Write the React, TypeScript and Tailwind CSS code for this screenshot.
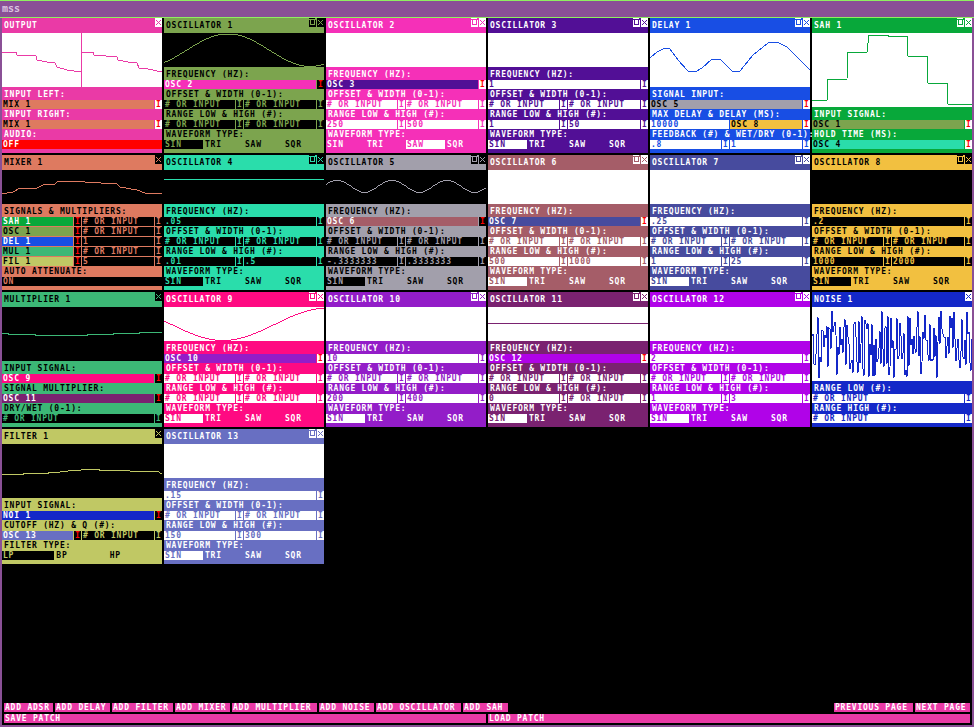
// modular synth patch page
type Tone = { bg: string; text: string; dark: boolean };
type Field = { v?: string; src?: string; bare?: boolean };
type Row =
  | { kind: "label"; text: string }
  | { kind: "fields"; fields: Field[] }
  | { kind: "choice"; items: string[]; on: number; red?: boolean };

type Mod = {
  tone: Tone;
  title: string;
  h: string;
  lines?: string[];
  min?: boolean;
  rows: Row[];
};

const T: Record<string, Tone> = {
  out: { bg: "bg-[#ea3aa6]", text: "text-[#ea3aa6]", dark: false },
  osc1: { bg: "bg-[#7ca44e]", text: "text-[#7ca44e]", dark: true },
  osc2: { bg: "bg-[#f530b8]", text: "text-[#f530b8]", dark: false },
  osc3: { bg: "bg-[#520f96]", text: "text-[#520f96]", dark: false },
  del: { bg: "bg-[#184ee4]", text: "text-[#184ee4]", dark: false },
  sah: { bg: "bg-[#08a83a]", text: "text-[#08a83a]", dark: false },
  mix: { bg: "bg-[#de7a60]", text: "text-[#de7a60]", dark: true },
  osc4: { bg: "bg-[#2addab]", text: "text-[#2addab]", dark: true },
  osc5: { bg: "bg-[#a29fab]", text: "text-[#a29fab]", dark: true },
  osc6: { bg: "bg-[#a55d68]", text: "text-[#a55d68]", dark: false },
  osc7: { bg: "bg-[#474b9e]", text: "text-[#474b9e]", dark: false },
  osc8: { bg: "bg-[#f2c040]", text: "text-[#f2c040]", dark: true },
  mul: { bg: "bg-[#3cb876]", text: "text-[#3cb876]", dark: true },
  osc9: { bg: "bg-[#ff0a82]", text: "text-[#ff0a82]", dark: false },
  osc10: { bg: "bg-[#931dc8]", text: "text-[#931dc8]", dark: false },
  osc11: { bg: "bg-[#7a2270]", text: "text-[#7a2270]", dark: false },
  osc12: { bg: "bg-[#b003e8]", text: "text-[#b003e8]", dark: false },
  noi: { bg: "bg-[#1428c8]", text: "text-[#1428c8]", dark: false },
  fil: { bg: "bg-[#c0c864]", text: "text-[#c0c864]", dark: true },
  osc13: { bg: "bg-[#686fc2]", text: "text-[#686fc2]", dark: false },
};

const SRC: Record<string, Tone> = {
  "MIX 1": T.mix,
  "OSC 1": T.osc1,
  "OSC 2": T.osc2,
  "OSC 3": T.osc3,
  "OSC 4": T.osc4,
  "OSC 5": T.osc5,
  "OSC 6": T.osc6,
  "OSC 7": T.osc7,
  "OSC 8": T.osc8,
  "OSC 9": T.osc9,
  "OSC 10": T.osc10,
  "OSC 11": T.osc11,
  "OSC 12": T.osc12,
  "OSC 13": T.osc13,
  "SAH 1": T.sah,
  "DEL 1": T.del,
  "MUL 1": T.mul,
  "FIL 1": T.fil,
  "NOI 1": T.noi,
};

const label = (text: string): Row => ({ kind: "label", text });
const fields = (...f: Field[]): Row => ({ kind: "fields", fields: f });
const val = (v: string): Field => ({ v });
const src = (s: string): Field => ({ src: s });
const blank: Field = {};

function pts(list: number[][]) {
  return list.map((p) => p.join(",")).join(" ");
}

function wave(mid: number, amp: number, period: number, peak: number) {
  const out: number[][] = [];
  for (let x = 0; x <= 160; x += 1) {
    out.push([x, Math.round(mid - amp * Math.cos((2 * Math.PI * (x - peak)) / period))]);
  }
  return pts(out);
}

function noise() {
  const out: number[][] = [];
  for (let x = 0; x <= 160; x += 1) {
    const s = Math.sin(x * 12.9898 + 4.1) * 43758.5453;
    const r = s - Math.floor(s);
    out.push([x, Math.round(3 + r * 68)]);
  }
  return pts(out);
}

function osc(
  title: string,
  tone: Tone,
  freq: Field,
  off: Field,
  wid: Field,
  low: Field,
  high: Field,
  on: number,
  lines?: string[]
): Mod {
  return {
    tone,
    title,
    h: "h-[34px]",
    min: true,
    lines,
    rows: [
      label("Frequency (Hz):"),
      fields(freq),
      label("Offset & Width (0-1):"),
      fields(off, wid),
      label("Range Low & High (#):"),
      fields(low, high),
      label("Waveform Type:"),
      { kind: "choice", items: ["SIN", "TRI", "SAW", "SQR"], on },
    ],
  };
}

const mods: Mod[] = [
  {
    tone: T.out,
    title: "Output",
    h: "h-[54px]",
    lines: [
      pts([[0, 19], [14, 19], [15, 22], [34, 23], [35, 27], [45, 29], [53, 30], [55, 34], [65, 37], [79, 39]]),
      "79.5,0 79.5,54",
      pts([[80, 19], [91, 19], [92, 22], [115, 24], [116, 27], [126, 29], [135, 30], [137, 35], [146, 36], [160, 39]]),
    ],
    rows: [
      label("Input Left:"),
      fields(src("MIX 1")),
      label("Input Right:"),
      fields(src("MIX 1")),
      label("Audio:"),
      { kind: "choice", items: ["OFF"], on: 0, red: true },
    ],
  },
  osc("Oscillator 1", T.osc1, src("OSC 2"), blank, blank, blank, blank, 0, [wave(16.75, 16.25, 164, 64)]),
  osc("Oscillator 2", T.osc2, src("OSC 3"), blank, blank, val("250"), val("500"), 2),
  osc("Oscillator 3", T.osc3, val("1"), blank, blank, val("1"), val("50"), 0),
  {
    tone: T.del,
    title: "Delay 1",
    h: "h-[54px]",
    min: true,
    lines: [
      pts([[0, 25], [7, 19], [15, 15], [20, 16], [28, 27], [38, 38], [45, 39], [52, 35], [62, 26], [70, 26], [82, 38], [90, 38], [103, 22], [118, 10], [127, 9], [137, 14], [147, 24], [160, 37]]),
    ],
    rows: [
      label("Signal Input:"),
      fields(src("OSC 5")),
      label("Max Delay & Delay (ms):"),
      fields({ v: "10000", bare: true }, src("OSC 8")),
      label("Feedback (#) & Wet/Dry (0-1):"),
      fields(val(".8"), val("1")),
    ],
  },
  {
    tone: T.sah,
    title: "SAH 1",
    h: "h-[74px]",
    min: true,
    lines: [
      pts([[0, 67], [15, 67], [16, 46], [35, 46], [36, 19], [55, 19], [57, 2], [76, 2], [76, 3], [95, 3], [96, 23], [115, 23], [116, 50], [135, 50], [136, 71], [160, 71]]),
    ],
    rows: [
      label("Input Signal:"),
      fields(src("OSC 1")),
      label("Hold Time (ms):"),
      fields(src("OSC 4")),
    ],
  },
  {
    tone: T.mix,
    title: "Mixer 1",
    h: "h-[34px]",
    lines: [
      pts([[0, 24], [11, 22], [18, 18], [35, 18], [41, 15], [53, 14], [56, 11], [75, 11], [83, 12], [115, 14], [118, 17], [135, 20], [143, 23], [160, 24]]),
    ],
    rows: [
      label("Signals & Multipliers:"),
      fields(src("SAH 1"), blank),
      fields(src("OSC 1"), blank),
      fields(src("DEL 1"), val("1")),
      fields(src("MUL 1"), blank),
      fields(src("FIL 1"), val("5")),
      label("Auto Attenuate:"),
      { kind: "choice", items: ["ON"], on: 0 },
    ],
  },
  osc("Oscillator 4", T.osc4, val(".05"), blank, blank, val(".01"), val(".5"), 0, ["0,9 160,9"]),
  osc("Oscillator 5", T.osc5, src("OSC 6"), blank, blank, val("-.3333333"), val(".3333333"), 0, [wave(16, 6, 55, 11)]),
  osc("Oscillator 6", T.osc6, src("OSC 7"), blank, blank, val("500"), val("1000"), 0),
  osc("Oscillator 7", T.osc7, val(".25"), blank, blank, val("1"), val("25"), 0),
  osc("Oscillator 8", T.osc8, val(".2"), blank, blank, val("1000"), val("2000"), 0),
  {
    tone: T.mul,
    title: "Multiplier 1",
    h: "h-[54px]",
    lines: [
      pts([[0, 26], [6, 26], [6, 27], [33, 27], [33, 28], [85, 28], [85, 27], [111, 27], [111, 26], [137, 26], [137, 25], [160, 25]]),
    ],
    rows: [
      label("Input Signal:"),
      fields(src("OSC 9")),
      label("Signal Multiplier:"),
      fields(src("OSC 11")),
      label("Dry/Wet (0-1):"),
      fields(blank),
    ],
  },
  osc("Oscillator 9", T.osc9, src("OSC 10"), blank, blank, blank, blank, 0, [wave(16.75, -16.25, 210, 59)]),
  osc("Oscillator 10", T.osc10, val("10"), blank, blank, val("200"), val("400"), 0),
  osc("Oscillator 11", T.osc11, src("OSC 12"), blank, blank, val("0"), blank, 0, ["0,16 160,16"]),
  osc("Oscillator 12", T.osc12, val("2"), blank, blank, val("1"), val("3"), 0),
  {
    tone: T.noi,
    title: "Noise 1",
    h: "h-[74px]",
    lines: [noise()],
    rows: [
      label("Range Low (#):"),
      fields(blank),
      label("Range High (#):"),
      fields(blank),
    ],
  },
  {
    tone: T.fil,
    title: "Filter 1",
    h: "h-[54px]",
    lines: [
      pts([[0, 30], [21, 30], [21, 29], [46, 29], [46, 28], [58, 28], [59, 27], [66, 27], [67, 26], [79, 26], [80, 25], [97, 25], [97, 26], [118, 26], [128, 27], [157, 28], [158, 29], [160, 29]]),
    ],
    rows: [
      label("Input Signal:"),
      fields(src("NOI 1")),
      label("Cutoff (Hz) & Q (#):"),
      fields(src("OSC 13"), blank),
      label("Filter Type:"),
      { kind: "choice", items: ["LP", "BP", "HP"], on: 0 },
    ],
  },
  osc("Oscillator 13", T.osc13, val(".15"), blank, blank, val("150"), val("300"), 0),
];

const adds = [
  ["ADD ADSR", "w-[49px]"],
  ["ADD DELAY", "w-[55px]"],
  ["ADD FILTER", "w-[61px]"],
  ["ADD MIXER", "w-[55px]"],
  ["ADD MULTIPLIER", "w-[85px]"],
  ["ADD NOISE", "w-[55px]"],
  ["ADD OSCILLATOR", "w-[85px]"],
  ["ADD SAH", "w-[45px]"],
];

function IconBtn({ tone, kind }: { tone: Tone; kind: "min" | "x" }) {
  const box = tone.dark ? "bg-black" : "bg-white";
  return (
    <div className={`w-[7px] h-[9px] ${box} ${tone.text}`}>
      <svg width="7" height="9" viewBox="0 0 7 9" shapeRendering="crispEdges" className="block">
        {kind === "min" ? (
          <path d="M0 1h6v1H0zM1 2h1v5H1zM5 2h1v5H5zM1 6h5v1H1zM6 0h1v2H6z" fill="currentColor" />
        ) : (
          <path d="M1 2h1v1H1zM5 2h1v1H5zM2 3h1v1H2zM4 3h1v1H4zM3 4h1v1H3zM2 5h1v1H2zM4 5h1v1H4zM1 6h1v1H1zM5 6h1v1H5z" fill="currentColor" />
        )}
      </svg>
    </div>
  );
}

function FieldCell({ f, tone }: { f: Field; tone: Tone }) {
  const s = f.src ? SRC[f.src] : null;
  const cell = s
    ? `${s.bg} ${s.dark ? "text-black" : "text-white"}`
    : `${tone.dark ? "bg-black" : "bg-white"} ${tone.text}`;
  const btn = `${tone.dark ? "bg-black" : "bg-white"} ${s ? "text-[#ff0000]" : tone.text}`;
  const text = f.src ?? f.v ?? "# OR INPUT";
  return (
    <div className="flex min-w-0 h-[9px] mb-px not-last:pr-px">
      <div className={`flex-1 min-w-0 pl-px leading-[9px] overflow-hidden whitespace-pre ${cell}`}>{text}</div>
      {!f.bare && <div className={`ml-px w-[7px] pl-[1px] leading-[9px] ${btn}`}>I</div>}
    </div>
  );
}

function Panel({ m }: { m: Mod }) {
  const ink = m.tone.dark ? "text-black" : "text-white";
  return (
    <div className={`flex flex-col ${m.tone.bg} ${ink}`}>
      <div className="flex h-[15px] items-start shrink-0">
        <div className="flex-1 pl-[2px] pt-[3px] leading-[9px]">{m.title.toUpperCase()}</div>
        {m.min && <IconBtn tone={m.tone} kind="min" />}
        {m.min && <div className="w-px" />}
        <IconBtn tone={m.tone} kind="x" />
      </div>
      <div className={`${m.h} shrink-0 ${m.tone.dark ? "bg-black" : "bg-white"} ${m.tone.text}`}>
        {m.lines && (
          <svg width="160" height="100%" shapeRendering="crispEdges" className="block overflow-hidden">
            {m.lines.map((l, i) => (
              <polyline key={i} points={l} fill="none" stroke="currentColor" strokeWidth="1" />
            ))}
          </svg>
        )}
      </div>
      <div className="pt-[3px]">
        {m.rows.map((r, i) => {
          if (r.kind === "label") {
            return (
              <div key={i} className="h-[10px] pl-[2px] leading-[9px] whitespace-pre">
                {r.text.toUpperCase()}
              </div>
            );
          }
          if (r.kind === "fields") {
            return (
              <div key={i} className={`grid ${r.fields.length === 2 ? "grid-cols-2" : "grid-cols-1"}`}>
                {r.fields.map((f, j) => (
                  <FieldCell key={j} f={f} tone={m.tone} />
                ))}
              </div>
            );
          }
          return (
            <div key={i} className="flex h-[9px] mb-px">
              {r.items.map((it, j) => {
                const sel = j === r.on;
                const look = !sel
                  ? ""
                  : r.red
                    ? "bg-[#ff0000] text-white"
                    : `${m.tone.dark ? "bg-black" : "bg-white"} ${m.tone.text}`;
                return (
                  <div key={j} className="flex-1 min-w-0">
                    <div className={`leading-[9px] pl-px ${r.items.length === 1 ? "w-full" : "w-[calc(100%-1px)]"} ${look}`}>
                      {it}
                    </div>
                  </div>
                );
              })}
            </div>
          );
        })}
      </div>
    </div>
  );
}

export default function App() {
  return (
    <div className="w-[974px] h-[727px] flex flex-col overflow-hidden font-['DejaVu_Sans_Mono',monospace] font-bold text-[8px] tracking-[0.78px]">
      <div className="h-[18px] shrink-0 border-y border-[#8ff060] bg-[#8a5096] pl-[2px] pt-[3px] text-[#dcc4e0] text-[10px] leading-[10px] tracking-normal">
        mss
      </div>
      <div className="flex-1 min-h-0 flex flex-col bg-black border-x-2 border-b-2 border-[#8a5096]">
        <div className="grid grid-cols-[repeat(6,160px)] auto-rows-[135px] gap-[2px]">
          {mods.map((m) => (
            <Panel key={m.title} m={m} />
          ))}
        </div>
        <div className="mt-auto px-[2px] pb-[2px] text-white">
          <div className="flex h-[9px] gap-[2px]">
            {adds.map(([t, w]) => (
              <div key={t} className={`${w} bg-[#ea3aa6] pl-px leading-[9px] whitespace-pre`}>
                {t}
              </div>
            ))}
            <div className="flex-1" />
            <div className="w-[79px] bg-[#ea3aa6] pl-px leading-[9px]">PREVIOUS PAGE</div>
            <div className="w-[55px] bg-[#ea3aa6] pl-px leading-[9px]">NEXT PAGE</div>
          </div>
          <div className="grid grid-cols-2 gap-[2px] h-[9px] mt-[2px]">
            <div className="bg-[#ea3aa6] pl-px leading-[9px]">SAVE PATCH</div>
            <div className="bg-[#ea3aa6] pl-px leading-[9px]">LOAD PATCH</div>
          </div>
        </div>
      </div>
    </div>
  );
}
